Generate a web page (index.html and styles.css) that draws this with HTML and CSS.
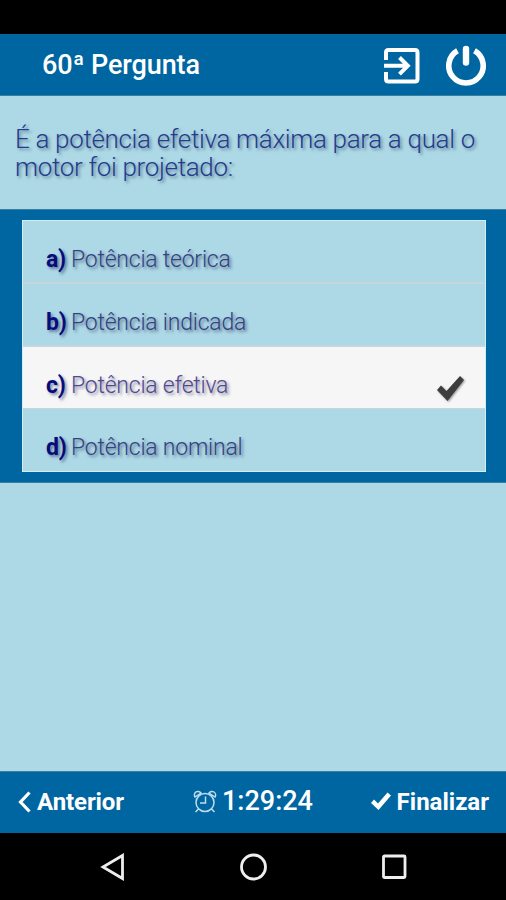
FILE: index.html
```html
<!DOCTYPE html>
<html lang="pt-BR">
<head>
<meta charset="utf-8">
<title>60ª Pergunta</title>
<link rel="stylesheet" href="styles.css">
</head>
<body>
<div class="screen">
  <div class="status-bar"></div>
  <header class="header">
    <h1 class="title">60ª Pergunta</h1>
    <svg class="exit-icon" width="36" height="36" viewBox="0 0 36 36" fill="none" stroke="currentColor" stroke-width="4">
      <path d="M2 12V4.500Q2 2 4.500 2H31Q33.500 2 33.500 4.500V31Q33.500 33.500 31 33.500H4.500Q2 33.500 2 31V24"/>
      <path d="M0 17.800H24M15.500 9.500L23.800 17.800L15.500 26.100"/>
    </svg>
    <svg class="power-icon" width="40" height="42" viewBox="0 0 40 42" fill="none" stroke="currentColor">
      <path stroke-width="5.600" d="M11.500 5.800A17.200 17.200 0 1 0 28.500 5.800"/>
      <path stroke-width="6.400" stroke-linecap="round" d="M20 4V17.500"/>
    </svg>
  </header>
  <section class="question">
    <p>É a potência efetiva máxima para a qual o<br>motor foi projetado:</p>
  </section>
  <main class="answers">
    <ul class="options">
      <li class="option"><b>a)</b><span>Potência teórica</span></li>
      <li class="option"><b>b)</b><span>Potência indicada</span></li>
      <li class="option selected"><b>c)</b><span>Potência efetiva</span>
        <svg class="chosen" width="30" height="28" viewBox="0 0 30 28"><path fill="currentColor" d="M1 15L5 10.500L10.500 16L24 1L28 5L11.500 26Z"/></svg>
      </li>
      <li class="option"><b>d)</b><span>Potência nominal</span></li>
    </ul>
  </main>
  <div class="blank"></div>
  <footer class="footer">
    <div class="previous">
      <svg width="14" height="22" viewBox="0 0 14 22" fill="none" stroke="currentColor" stroke-width="3.200"><path d="M12.500 1.500L3.500 11L12.500 20.500"/></svg>
      <span>Anterior</span>
    </div>
    <div class="timer">
      <svg width="24" height="24" viewBox="0 0 24 24" fill="none" stroke="currentColor" stroke-width="1.500">
        <circle cx="12" cy="12.500" r="9"/>
        <path d="M12.500 6.500V13H7M5.500 19L2.500 22M18.500 19L21.500 22M2 7A3.600 3.600 0 1 1 8 3ZM22 7A3.600 3.600 0 1 0 16 3Z"/>
      </svg>
      <span>1:29:24</span>
    </div>
    <div class="finish">
      <svg width="20" height="19" viewBox="0 0 20 19"><path fill="currentColor" d="M0 11L3 7.500L7 11.500L16.500 0.500L20 3.500L7.500 18Z"/></svg>
      <span>Finalizar</span>
    </div>
  </footer>
  <nav class="system-nav">
    <svg width="28" height="28" viewBox="0 0 28 28"><path d="M23.500 2.500V25.500L4 14Z"/></svg>
    <svg width="28" height="28" viewBox="0 0 28 28"><circle cx="13.500" cy="14" r="12"/></svg>
    <svg width="28" height="28" viewBox="0 0 28 28"><rect x="2.500" y="3" width="21.500" height="21.500" rx="1"/></svg>
  </nav>
</div>
</body>
</html>
```
FILE: styles.css
```css
* { box-sizing: border-box; }
body { margin: 0; background: #000; font-family: Roboto, "Liberation Sans", sans-serif; }
.screen { width: 506px; height: 900px; display: flex; flex-direction: column; overflow: hidden; background: #add8e6; }
.status-bar { height: 34px; background: #000; }
.header { height: 62px; display: flex; align-items: center; padding: 2px 20px 0 42px; background: #0066a1; color: #fff; border-bottom: 1px solid #397f9f; }
.title { margin: 0; flex: 1; padding-bottom: 2px; font-size: 27px; line-height: 30px; font-weight: 500; letter-spacing: -.1px; white-space: nowrap; }
.exit-icon { margin-right: 26px; }
.question { height: 113px; padding: 29px 15px 0; color: #263b8c; font-size: 26px; line-height: 28px; font-weight: 300; letter-spacing: -.33px; text-shadow: 2px 2px 3px rgba(30, 60, 90, .5); white-space: nowrap; }
.question p { margin: 0; }
.answers { height: 274px; padding: 10px 20px 0 22px; background: #0066a1; border-top: 1px solid #397f9f; border-bottom: 1px solid #397f9f; }
.options { height: 252px; margin: 0; padding: 0; list-style: none; border: 1px solid #d4edf5; display: grid; grid-template-rows: 63px 63px 62px 62px; background: #add8e6; }
.option { display: flex; align-items: center; padding: 16px 19px 0 23px; color: #34427f; font-size: 23px; line-height: 28px; font-weight: 300; letter-spacing: -.22px; text-shadow: 2px 2px 3px rgba(20, 30, 80, .5); border-bottom: 2px solid #c5d6dc; white-space: nowrap; }
.option:last-child { border-bottom: 0; }
.option b { width: 25px; color: #080b7c; font-weight: 700; }
.selected { background: #f6f6f6; color: #51478f; border-bottom-width: 1px; }
.chosen { margin: 6px 0 0 auto; color: #3d3d40; filter: drop-shadow(1px 1px 1px rgba(0, 0, 0, .4)); }
.blank { flex: 1; }
.footer { height: 62px; display: grid; grid-template-columns: 1fr 1fr 1fr; align-items: center; padding: 0 17px 2px; background: #0066a1; color: #fff; border-top: 1px solid #397f9f; white-space: nowrap; }
.previous, .timer, .finish { display: flex; align-items: center; }
.previous { gap: 6px; font-size: 24px; font-weight: 700; letter-spacing: -.1px; }
.timer { justify-content: center; gap: 5px; font-size: 27px; line-height: 30px; font-weight: 500; }
.timer span { padding-bottom: 1px; }
.timer svg { color: #bddcf0; }
.finish { justify-content: flex-end; gap: 6px; font-size: 24px; font-weight: 700; }
.system-nav { height: 67px; display: flex; justify-content: center; align-items: center; gap: 113px; padding-left: 1px; background: #000; }
.system-nav svg { fill: none; stroke: #eee; stroke-width: 2.800; }
```
